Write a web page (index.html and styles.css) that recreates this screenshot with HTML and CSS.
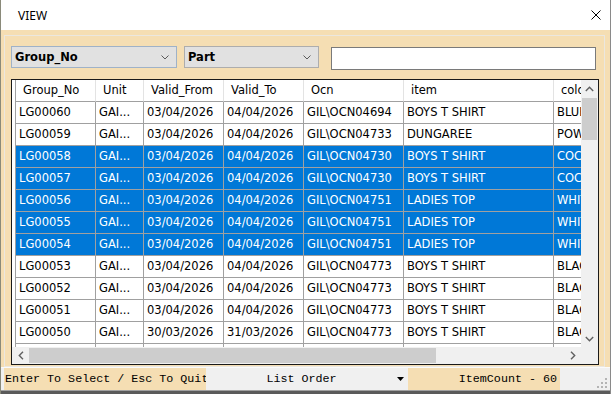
FILE: index.html
```html
<!DOCTYPE html>
<html lang="en">
<head>
    <meta charset="UTF-8">
    <title>VIEW</title>
    <link rel="stylesheet" href="styles.css">
</head>
<body>
    <div class="window">
        <div class="titlebar">
            <span class="title">VIEW</span>
            <svg class="close" width="10" height="10" viewBox="0 0 10 10">
                <path d="M0.5 0.5 L9.5 9.5 M9.5 0.5 L0.5 9.5" stroke="#000" stroke-width="1" fill="none"/>
            </svg>
        </div>

        <div class="client">
            <div class="frame">
                <div class="filters">
                    <div class="combo combo-field">
                        <span>Group_No</span>
                        <svg width="8" height="5" viewBox="0 0 8 5"><path d="M0.5 0.5 L4 4 L7.5 0.5" stroke="#5a5a5a" fill="none"/></svg>
                    </div>
                    <div class="combo combo-part">
                        <span>Part</span>
                        <svg width="8" height="5" viewBox="0 0 8 5"><path d="M0.5 0.5 L4 4 L7.5 0.5" stroke="#5a5a5a" fill="none"/></svg>
                    </div>
                    <input class="search" type="text">
                </div>

                <div class="grid">
                    <div class="grid-main">
                        <div class="viewport">
                            <div class="table">
                                <div class="row head">
                                    <div>Group_No</div><div>Unit</div><div>Valid_From</div><div>Valid_To</div><div>Ocn</div><div>item</div><div>colour</div>
                                </div>
                                <div class="row">
                                    <div>LG00060</div><div>GAI...</div><div>03/04/2026</div><div>04/04/2026</div><div>GIL\OCN04694</div><div>BOYS T SHIRT</div><div>BLUE</div>
                                </div>
                                <div class="row">
                                    <div>LG00059</div><div>GAI...</div><div>03/04/2026</div><div>04/04/2026</div><div>GIL\OCN04733</div><div>DUNGAREE</div><div>POWDER</div>
                                </div>
                                <div class="row selected">
                                    <div>LG00058</div><div>GAI...</div><div>03/04/2026</div><div>04/04/2026</div><div>GIL\OCN04730</div><div>BOYS T SHIRT</div><div>COCOA</div>
                                </div>
                                <div class="row selected">
                                    <div>LG00057</div><div>GAI...</div><div>03/04/2026</div><div>04/04/2026</div><div>GIL\OCN04730</div><div>BOYS T SHIRT</div><div>COCOA</div>
                                </div>
                                <div class="row selected">
                                    <div>LG00056</div><div>GAI...</div><div>03/04/2026</div><div>04/04/2026</div><div>GIL\OCN04751</div><div>LADIES TOP</div><div>WHITE</div>
                                </div>
                                <div class="row selected">
                                    <div>LG00055</div><div>GAI...</div><div>03/04/2026</div><div>04/04/2026</div><div>GIL\OCN04751</div><div>LADIES TOP</div><div>WHITE</div>
                                </div>
                                <div class="row selected">
                                    <div>LG00054</div><div>GAI...</div><div>03/04/2026</div><div>04/04/2026</div><div>GIL\OCN04751</div><div>LADIES TOP</div><div>WHITE</div>
                                </div>
                                <div class="row">
                                    <div>LG00053</div><div>GAI...</div><div>03/04/2026</div><div>04/04/2026</div><div>GIL\OCN04773</div><div>BOYS T SHIRT</div><div>BLACK</div>
                                </div>
                                <div class="row">
                                    <div>LG00052</div><div>GAI...</div><div>03/04/2026</div><div>04/04/2026</div><div>GIL\OCN04773</div><div>BOYS T SHIRT</div><div>BLACK</div>
                                </div>
                                <div class="row">
                                    <div>LG00051</div><div>GAI...</div><div>03/04/2026</div><div>04/04/2026</div><div>GIL\OCN04773</div><div>BOYS T SHIRT</div><div>BLACK</div>
                                </div>
                                <div class="row">
                                    <div>LG00050</div><div>GAI...</div><div>30/03/2026</div><div>31/03/2026</div><div>GIL\OCN04773</div><div>BOYS T SHIRT</div><div>BLACK</div>
                                </div>
                                <div class="row">
                                    <div>LG00049</div><div>GAI...</div><div>30/03/2026</div><div>31/03/2026</div><div>GIL\OCN04773</div><div>BOYS T SHIRT</div><div>BLACK</div>
                                </div>
                            </div>
                        </div>
                        <div class="vscroll">
                            <div class="sb-btn">
                                <svg width="9" height="6" viewBox="0 0 9 6"><path d="M0.8 5 L4.5 1.3 L8.2 5" stroke="#606060" stroke-width="1.4" fill="none"/></svg>
                            </div>
                            <div class="vthumb"></div>
                            <div class="sb-btn">
                                <svg width="9" height="6" viewBox="0 0 9 6"><path d="M0.8 1 L4.5 4.7 L8.2 1" stroke="#606060" stroke-width="1.4" fill="none"/></svg>
                            </div>
                        </div>
                    </div>
                    <div class="hscroll-row">
                        <div class="hscroll">
                            <div class="sb-btn">
                                <svg width="6" height="9" viewBox="0 0 6 9"><path d="M5 0.8 L1.3 4.5 L5 8.2" stroke="#606060" stroke-width="1.4" fill="none"/></svg>
                            </div>
                            <div class="hthumb"></div>
                            <div class="sb-btn">
                                <svg width="6" height="9" viewBox="0 0 6 9"><path d="M1 0.8 L4.7 4.5 L1 8.2" stroke="#606060" stroke-width="1.4" fill="none"/></svg>
                            </div>
                        </div>
                        <div class="corner"></div>
                    </div>
                </div>
            </div>
        </div>

        <div class="statusbar">
            <div class="panel hint">Enter To Select / Esc To Quit</div>
            <div class="panel order">
                <span>List Order</span>
                <svg width="7" height="4" viewBox="0 0 7 4"><path d="M0 0 L7 0 L3.5 4 Z" fill="#000"/></svg>
            </div>
            <div class="panel count">ItemCount - 60</div>
            <svg class="grip" width="11" height="11" viewBox="0 0 11 11" fill="#b4b4b4">
                <rect x="8" y="0" width="2" height="2"/>
                <rect x="4" y="4" width="2" height="2"/><rect x="8" y="4" width="2" height="2"/>
                <rect x="0" y="8" width="2" height="2"/><rect x="4" y="8" width="2" height="2"/><rect x="8" y="8" width="2" height="2"/>
            </svg>
        </div>
        <div class="edge"></div>
    </div>
</body>
</html>
```

FILE: styles.css
```css
body {
    margin: 0;
    background-color: #5a5a5a;
    overflow: hidden;
}
.window {
    width: 611px;
    height: 394px;
    box-sizing: border-box;
    border-left: 1px solid #8a8a7a;
    border-right: 1px solid #8a8a8a;
    display: flex;
    flex-direction: column;
    background-color: #f5deb3;
}
.titlebar {
    height: 30px;
    flex: none;
    background-color: #fff;
    display: flex;
    align-items: center;
    padding-left: 17px;
}
.title {
    font-family: "Noto Sans", "Open Sans", sans-serif;
    font-size: 12px;
    color: #000;
}
.close {
    margin-left: auto;
    margin-right: 9px;
}
.client {
    flex: 1;
    display: flex;
    flex-direction: column;
    background-color: #f5deb3;
}
.frame {
    flex: 1;
    margin: 5px 5px 0 3px;
    border: 1px solid #ebe7df;
    padding: 10px 5px 0 6px;
}
.filters {
    display: flex;
    align-items: flex-start;
    height: 24px;
}
.combo {
    height: 22px;
    box-sizing: border-box;
    background-color: #e1e1e1;
    border: 1px solid #adadad;
    display: flex;
    align-items: center;
    justify-content: space-between;
    padding: 0 7px 0 3px;
    font-family: "DejaVu Sans", sans-serif;
    font-size: 11.5px;
    font-weight: bold;
    color: #000;
}
.combo-field {
    width: 166px;
    margin-right: 7px;
    border-color: #9fb2c8;
}
.combo-part {
    width: 135px;
    margin-right: 12px;
}
.search {
    width: 265px;
    height: 23px;
    margin: 1px 0 0 0;
    padding: 0;
    box-sizing: border-box;
    border: 1px solid #7a7a7a;
    background-color: #fff;
}
.grid {
    margin-top: 9px;
    width: 588px;
    height: 286px;
    box-sizing: border-box;
    border: 1px solid #1a1a1a;
    background-color: #fff;
    display: flex;
    flex-direction: column;
}
.grid-main {
    display: flex;
    height: 267px;
}
.viewport {
    flex: 1;
    overflow: hidden;
    padding-left: 3px;
}
.table {
    border-left: 1px solid #a0a0a0;
    width: 638px;
    font-family: "DejaVu Sans", sans-serif;
    font-size: 11.5px;
    color: #000;
}
.row {
    display: grid;
    grid-template-columns: 80px 48px 80px 80px 100px 150px 100px;
    height: 22px;
}
.row > div {
    box-sizing: border-box;
    border-right: 1px solid #a0a0a0;
    border-bottom: 1px solid #a0a0a0;
    padding-left: 3px;
    line-height: 21px;
    white-space: nowrap;
    overflow: hidden;
}
.row.head > div {
    padding-left: 7px;
    border-right-color: #e3e3e3;
}
.row.selected {
    background-color: #0078d7;
    color: #fff;
}
.vscroll {
    width: 17px;
    background-color: #f0f0f0;
    display: flex;
    flex-direction: column;
}
.sb-btn {
    width: 17px;
    height: 17px;
    flex: none;
    display: flex;
    align-items: center;
    justify-content: center;
}
.vscroll .sb-btn:last-child {
    margin-top: auto;
}
.vthumb {
    height: 42px;
    margin: 1px 1px 0 1px;
    background-color: #cdcdcd;
}
.hscroll-row {
    display: flex;
    height: 17px;
}
.hscroll {
    flex: 1;
    display: flex;
    background-color: #f0f0f0;
}
.hthumb {
    width: 407px;
    margin: 1px 0;
    background-color: #cdcdcd;
}
.hscroll .sb-btn:last-child {
    margin-left: auto;
}
.corner {
    width: 17px;
    background-color: #f0f0f0;
}
.statusbar {
    height: 23px;
    flex: none;
    box-sizing: border-box;
    background-color: #f0f0f0;
    border-top: 1px solid #fafafa;
    padding-left: 3px;
    display: flex;
    font-family: "Liberation Mono", monospace;
    font-size: 11.7px;
    color: #000;
}
.panel {
    height: 22px;
    line-height: 22px;
    white-space: nowrap;
    overflow: hidden;
}
.hint {
    width: 202px;
    background-color: #f5deb3;
    padding-left: 1px;
    box-sizing: border-box;
}
.order {
    width: 202px;
    display: flex;
    align-items: center;
}
.order span {
    flex: 1;
    text-align: center;
}
.order svg {
    margin-right: 4px;
}
.count {
    width: 152px;
    background-color: #f5deb3;
    text-align: right;
    padding-right: 3px;
    box-sizing: border-box;
}
.grip {
    margin-left: auto;
    margin-right: 2px;
    align-self: flex-end;
    margin-bottom: 1px;
}
.edge {
    height: 4px;
    flex: none;
    background-color: #5a5a5a;
    border-top: 1px solid #a0a0a0;
    box-sizing: border-box;
}
```
